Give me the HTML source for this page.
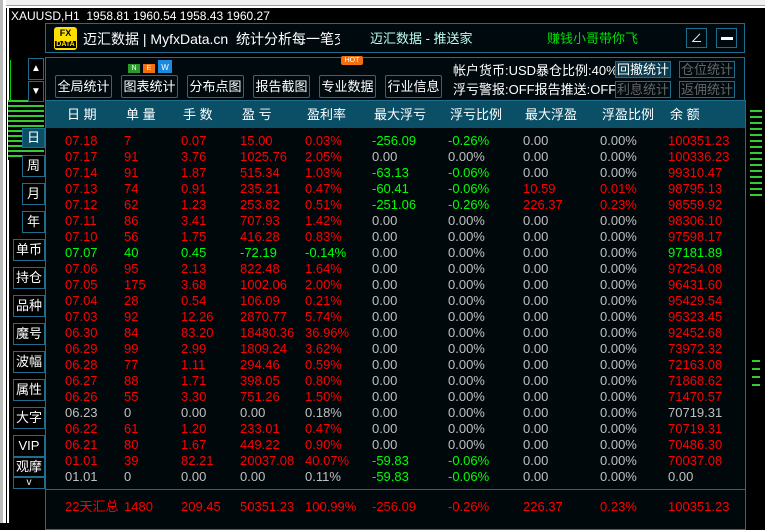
<!DOCTYPE html>
<html><head><meta charset="utf-8"><style>
*{margin:0;padding:0;box-sizing:border-box}
body{width:765px;height:523px;background:#000;position:relative;overflow:hidden;font-family:"Liberation Sans","Noto Sans CJK SC",sans-serif;color:#c8c8c8}
.a{position:absolute}
.btn{position:absolute;border:1px solid #1c6e8c;color:#fff;font-size:13px;text-align:center;background:#000}
.tb{position:absolute;top:75px;height:23px;border:1px solid #1c6e8c;border-radius:2px;color:#fff;font-size:13px;line-height:21px;text-align:center}
.r{position:absolute;font-size:13px;white-space:nowrap;line-height:16px}
.R{color:#f00}.G{color:#0f0}.W{color:#c0c0c0}
</style></head><body>
<div class="a" style="left:0;top:0;width:765px;height:6px;background:#f0f0f0;border-bottom:1px solid #a0a0a0"></div>
<div class="a" style="left:0;top:0;width:3px;height:523px;background:#bbb"></div>
<div class="a" style="left:3px;top:0;width:3px;height:523px;background:#fff"></div>
<div class="a" style="left:6px;top:6px;width:759px;height:2px;background:#fff"></div>
<div class="a" style="left:7px;top:8px;width:2px;height:515px;background:#fff"></div>
<div class="r" style="left:11px;top:8px;color:#fff;font-size:12px">XAUUSD,H1&nbsp; 1958.81 1960.54 1958.43 1960.27</div>
<div class="a" style="left:10px;top:60px;width:1px;height:80px;background:#0c0"></div>
<div class="a" style="left:8px;top:100px;width:36px;height:60px;background:repeating-linear-gradient(#3c3 0 2px,#000 2px 5px)"></div>
<div class="a" style="left:750px;top:110px;width:12px;height:90px;background:repeating-linear-gradient(#3c3 0 2px,#000 2px 6px)"></div>
<div class="a" style="left:752px;top:360px;width:8px;height:30px;background:repeating-linear-gradient(#3c3 0 2px,#000 2px 8px)"></div>
<div class="a" style="left:45px;top:23px;width:700px;height:30px;border:1px solid #1c6e8c;background:#000a0e"></div>
<div class="a" style="left:54px;top:27px;width:23px;height:23px;background:#ffe000;border-radius:3px;color:#000;font-size:9px;font-weight:bold;line-height:10px;text-align:center;padding-top:1px">FX<br><span style="font-size:7px;background:#000;color:#ffe000;padding:0 1px">DATA</span></div>
<div class="r" style="left:83px;top:31px;color:#fff;font-size:14px">迈汇数据 | MyfxData.cn&nbsp; 统计分析每一笔交易</div>
<div class="a" style="left:340px;top:28px;width:28px;height:22px;background:#000a0e"></div>
<div class="r" style="left:370px;top:31px;color:#bfe;font-size:13px">迈汇数据 - 推送家</div>
<div class="r" style="left:547px;top:31px;color:#0d0;font-size:13px">赚钱小哥带你飞</div>
<div class="a" style="left:686px;top:28px;width:21px;height:20px;border:1px solid #1c6e8c;color:#fff;font-size:12px;text-align:center;line-height:18px">∠</div>
<div class="a" style="left:716px;top:28px;width:21px;height:20px;border:1px solid #1c6e8c"><div class="a" style="left:4px;top:8px;width:12px;height:3px;background:#fff"></div></div>
<div class="a" style="left:45px;top:57px;width:700px;height:44px;border:1px solid #1c6e8c;background:#000a0e"></div>
<div class="a" style="left:128px;top:64px;width:12px;height:9px;background:#2a9a2a;color:#fff;font-size:7px;text-align:center;line-height:9px">N</div>
<div class="a" style="left:143px;top:64px;width:12px;height:9px;background:#f07010;color:#fff;font-size:7px;text-align:center;line-height:9px">E</div>
<div class="a" style="left:158px;top:60px;width:14px;height:13px;background:#1a8ae0;color:#fff;font-size:8px;text-align:center;line-height:15px">W</div>
<div class="a" style="left:341px;top:56px;width:22px;height:9px;background:#f07010;color:#fff;font-size:7px;text-align:center;line-height:9px;border-radius:2px">HOT</div>
<div class="tb" style="left:55px;width:57px">全局统计</div>
<div class="tb" style="left:121px;width:57px">图表统计</div>
<div class="tb" style="left:187px;width:57px">分布点图</div>
<div class="tb" style="left:253px;width:57px">报告截图</div>
<div class="tb" style="left:319px;width:57px">专业数据</div>
<div class="tb" style="left:385px;width:57px">行业信息</div>
<div class="r" style="left:453px;top:63px;color:#fff;font-size:13px">帐户货币:USD暴仓比例:40%</div>
<div class="r" style="left:453px;top:82px;color:#fff;font-size:13px">浮亏警报:OFF报告推送:OFF</div>
<div class="a" style="left:615px;top:61px;width:56px;height:17px;border:1px solid #1c6e8c;background:#0a3a4c;color:#fff;font-size:13px;line-height:15px;text-align:center">回撤统计</div>
<div class="a" style="left:679px;top:61px;width:56px;height:17px;border:1px solid #1c6e8c;color:#666;font-size:13px;line-height:15px;text-align:center">仓位统计</div>
<div class="a" style="left:615px;top:81px;width:56px;height:17px;border:1px solid #1c6e8c;color:#666;font-size:13px;line-height:15px;text-align:center">利息统计</div>
<div class="a" style="left:679px;top:81px;width:56px;height:17px;border:1px solid #1c6e8c;color:#666;font-size:13px;line-height:15px;text-align:center">返佣统计</div>
<div class="a" style="left:45px;top:100px;width:701px;height:430px;border:1px solid #1c6e8c;background:#00080c"></div>
<div class="a" style="left:46px;top:101px;width:699px;height:27px;background:#0b4f67"></div>
<div class="a" style="left:46px;top:489px;width:699px;height:1px;background:#1c6e8c"></div>
<div id="t"></div>
<div class="btn" style="left:28px;top:58px;width:16px;height:22px;line-height:20px;font-size:10px">▲</div>
<div class="btn" style="left:28px;top:81px;width:16px;height:21px;line-height:20px;font-size:10px">▼</div>
<div id="sb"></div>
<script>
var rows=[
["07.18","7","0.07","15.00","0.03%","-256.09","-0.26%","0.00","0.00%","100351.23","R"],
["07.17","91","3.76","1025.76","2.05%","0.00","0.00%","0.00","0.00%","100336.23","R"],
["07.14","91","1.87","515.34","1.03%","-63.13","-0.06%","0.00","0.00%","99310.47","R"],
["07.13","74","0.91","235.21","0.47%","-60.41","-0.06%","10.59","0.01%","98795.13","R"],
["07.12","62","1.23","253.82","0.51%","-251.06","-0.26%","226.37","0.23%","98559.92","R"],
["07.11","86","3.41","707.93","1.42%","0.00","0.00%","0.00","0.00%","98306.10","R"],
["07.10","56","1.75","416.28","0.83%","0.00","0.00%","0.00","0.00%","97598.17","R"],
["07.07","40","0.45","-72.19","-0.14%","0.00","0.00%","0.00","0.00%","97181.89","G"],
["07.06","95","2.13","822.48","1.64%","0.00","0.00%","0.00","0.00%","97254.08","R"],
["07.05","175","3.68","1002.06","2.00%","0.00","0.00%","0.00","0.00%","96431.60","R"],
["07.04","28","0.54","106.09","0.21%","0.00","0.00%","0.00","0.00%","95429.54","R"],
["07.03","92","12.26","2870.77","5.74%","0.00","0.00%","0.00","0.00%","95323.45","R"],
["06.30","84","83.20","18480.36","36.96%","0.00","0.00%","0.00","0.00%","92452.68","R"],
["06.29","99","2.99","1809.24","3.62%","0.00","0.00%","0.00","0.00%","73972.32","R"],
["06.28","77","1.11","294.46","0.59%","0.00","0.00%","0.00","0.00%","72163.08","R"],
["06.27","88","1.71","398.05","0.80%","0.00","0.00%","0.00","0.00%","71868.62","R"],
["06.26","55","3.30","751.26","1.50%","0.00","0.00%","0.00","0.00%","71470.57","R"],
["06.23","0","0.00","0.00","0.18%","0.00","0.00%","0.00","0.00%","70719.31","W"],
["06.22","61","1.20","233.01","0.47%","0.00","0.00%","0.00","0.00%","70719.31","R"],
["06.21","80","1.67","449.22","0.90%","0.00","0.00%","0.00","0.00%","70486.30","R"],
["01.01","39","82.21","20037.08","40.07%","-59.83","-0.06%","0.00","0.00%","70037.08","R"],
["01.01","0","0.00","0.00","0.11%","-59.83","-0.06%","0.00","0.00%","0.00","W"]];
var xs=[65,124,181,240,305,372,448,523,600,668];
var h=["日 期","单 量","手 数","盈 亏","盈利率","最大浮亏","浮亏比例","最大浮盈","浮盈比例","余 额"];
var s="";
h.forEach(function(t,i){s+='<div class="r" style="left:'+(xs[i]+2)+'px;top:107px;color:#fff">'+t+'</div>';});
rows.forEach(function(r,j){var y=133+j*16;var c=r[10];
for(var i=0;i<10;i++){var cc=c;
if(i>=5&&i<=8){var v=parseFloat(r[i]);cc=v<0?"G":(v>0?"R":"W");}
if(c=="G"&&i==9)cc="G";
s+='<div class="r '+cc+'" style="left:'+xs[i]+'px;top:'+y+'px">'+r[i]+'</div>';}});
var sm=["22天汇总","1480","209.45","50351.23","100.99%","-256.09","-0.26%","226.37","0.23%","100351.23"];
sm.forEach(function(t,i){s+='<div class="r R" style="left:'+xs[i]+'px;top:499px">'+t+'</div>';});
document.getElementById("t").innerHTML=s;
var sb=[["日",22,128,20],["周",22,155,22],["月",22,183,22],["年",22,211,22],["单币",13,239,22],["持仓",13,267,22],["品种",13,295,22],["魔号",13,323,22],["波幅",13,351,22],["属性",13,379,22],["大字",13,407,22],["VIP",13,435,22],["观摩",13,457,20],["v",13,477,12]];
var q="";sb.forEach(function(b,i){q+='<div class="btn" style="left:'+b[1]+'px;top:'+b[2]+'px;width:'+(45-b[1])+'px;height:'+b[3]+'px;line-height:'+(b[3]-2)+'px;'+(i==0?'background:#0b4f67;':'')+(i==13?'font-size:10px;':'')+'">'+b[0]+'</div>';});
document.getElementById("sb").innerHTML=q;
</script>
</body></html>
